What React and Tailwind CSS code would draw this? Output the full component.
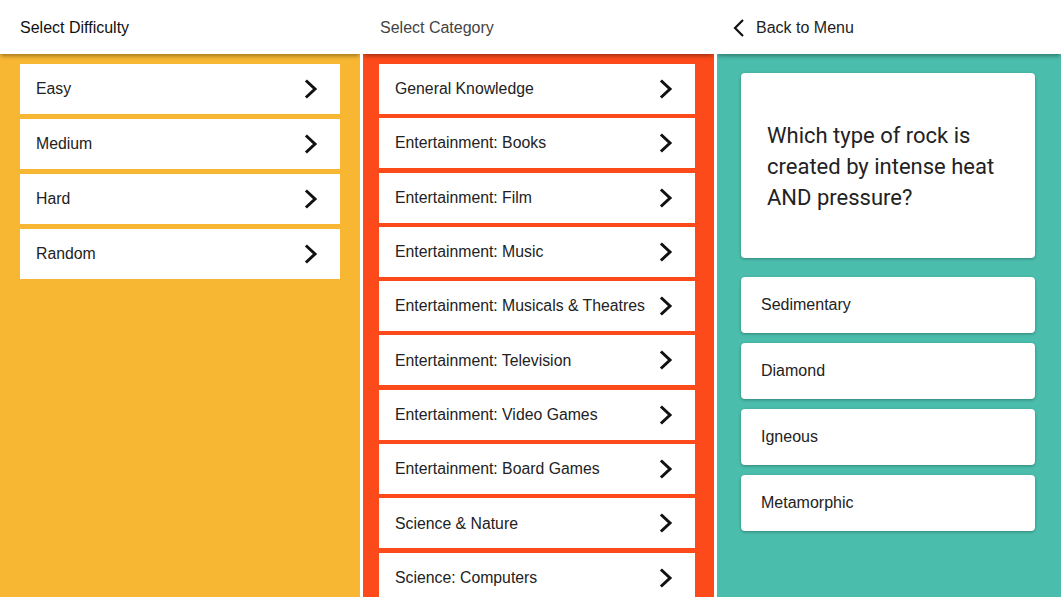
import { useState } from "react"

const DIFFICULTIES = ["Easy", "Medium", "Hard", "Random"]

const CATEGORIES = [
  "General Knowledge",
  "Entertainment: Books",
  "Entertainment: Film",
  "Entertainment: Music",
  "Entertainment: Musicals & Theatres",
  "Entertainment: Television",
  "Entertainment: Video Games",
  "Entertainment: Board Games",
  "Science & Nature",
  "Science: Computers",
]

const ANSWERS = ["Sedimentary", "Diamond", "Igneous", "Metamorphic"]

function ChevronRight() {
  return (
    <svg width="14" height="20" viewBox="0 0 14 20" fill="none" className="shrink-0">
      <polyline points="3,2.5 11,10 3,17.5" stroke="#111" strokeWidth="3" strokeLinecap="square" />
    </svg>
  )
}

function ChevronLeft() {
  return (
    <svg width="14" height="20" viewBox="0 0 14 20" fill="none" className="shrink-0">
      <polyline points="11,2 3,10 11,18" stroke="#111" strokeWidth="2.2" />
    </svg>
  )
}

function Header({ children }) {
  return (
    <div className="relative z-10 h-[54px] shrink-0 bg-white flex items-center pt-[2px] shadow-[0_3px_4px_-1px_rgba(0,0,0,0.35)]">
      {children}
    </div>
  )
}

function ListItem({ label }) {
  return (
    <button className="h-[50px] w-full shrink-0 bg-white flex items-center justify-between pl-4 pr-[22px] text-left text-[15.8px] text-[#222] cursor-pointer">
      <span>{label}</span>
      <ChevronRight />
    </button>
  )
}

export default function App() {
  const [picked, setPicked] = useState(null)

  return (
    <div
      className="h-[597px] w-[1061px] overflow-hidden flex gap-[3px] bg-white"
      style={{ fontFamily: "'Liberation Sans', Arial, sans-serif" }}
    >
      {/* Difficulty */}
      <div className="w-[360px] shrink-0 flex flex-col overflow-hidden bg-[#f7b733]">
        <Header>
          <span className="pl-5 text-[16px] text-[#111]">Select Difficulty</span>
        </Header>
        <div className="flex flex-col gap-[5px] pl-5 pr-5 pt-[10px]">
          {DIFFICULTIES.map((d) => (
            <ListItem key={d} label={d} />
          ))}
        </div>
      </div>

      {/* Category */}
      <div className="w-[351px] shrink-0 flex flex-col overflow-hidden bg-[#fc4a1a]">
        <Header>
          <span className="pl-[17px] text-[16px] text-[#444]">Select Category</span>
        </Header>
        <div className="flex flex-col gap-[4.3px] pl-4 pr-[19px] pt-[10px]">
          {CATEGORIES.map((c) => (
            <ListItem key={c} label={c} />
          ))}
        </div>
      </div>

      {/* Question */}
      <div className="flex-1 flex flex-col overflow-hidden bg-[#4abdac]">
        <Header>
          <button className="flex items-center gap-[10px] pl-[15px] text-[16px] text-[#222] cursor-pointer">
            <ChevronLeft />
            <span>Back to Menu</span>
          </button>
        </Header>
        <div className="pl-6 pr-[26px] pt-[19px] flex flex-col">
          <div className="h-[185px] bg-white rounded-[4px] shadow-[0_1px_3px_rgba(0,0,0,0.3)] flex items-center px-[26px] pt-[2px]">
            <p
              className="text-[22px] leading-[31px] text-[#222]"
              style={{ fontFamily: "Roboto, 'Liberation Sans', sans-serif" }}
            >
              Which type of rock is created by intense heat AND pressure?
            </p>
          </div>
          <div className="mt-[19px] flex flex-col gap-[10px]">
            {ANSWERS.map((a) => (
              <button
                key={a}
                onClick={() => setPicked(a)}
                className={`h-[56px] w-full rounded-[4px] bg-white shadow-[0_1px_3px_rgba(0,0,0,0.3)] flex items-center px-5 text-left text-[16px] text-[#222] cursor-pointer ${picked === a ? "outline outline-2 outline-[#fc4a1a]" : ""}`}
              >
                {a}
              </button>
            ))}
          </div>
        </div>
      </div>
    </div>
  )
}
